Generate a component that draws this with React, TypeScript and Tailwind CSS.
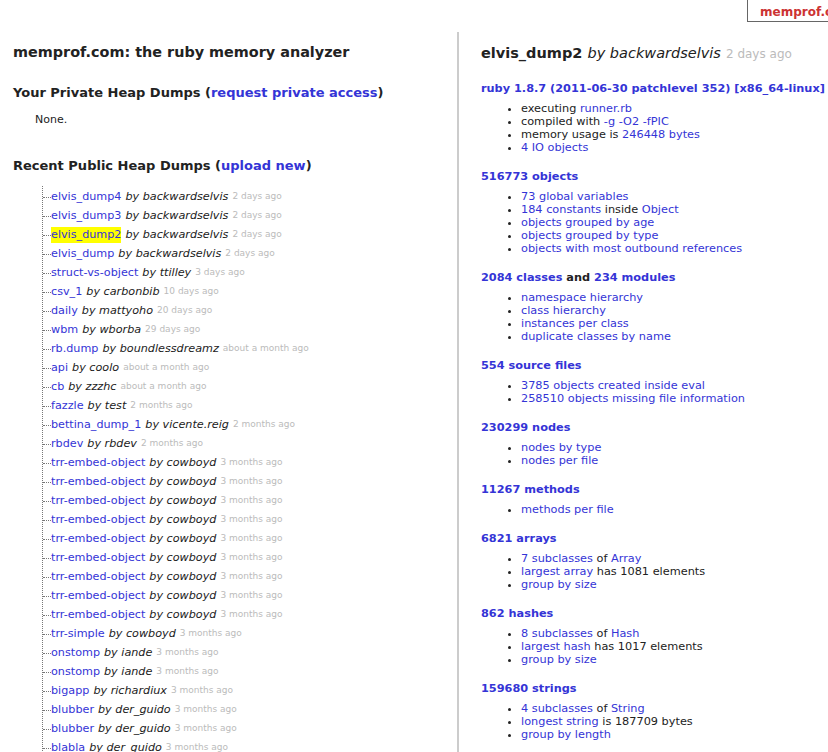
import React from "react";

type Dump = { name: string; user: string; ago: string; current?: boolean };

const dumps: Dump[] = [
  { name: "elvis_dump4", user: "backwardselvis", ago: "2 days ago" },
  { name: "elvis_dump3", user: "backwardselvis", ago: "2 days ago" },
  { name: "elvis_dump2", user: "backwardselvis", ago: "2 days ago", current: true },
  { name: "elvis_dump", user: "backwardselvis", ago: "2 days ago" },
  { name: "struct-vs-object", user: "ttilley", ago: "3 days ago" },
  { name: "csv_1", user: "carbonbib", ago: "10 days ago" },
  { name: "daily", user: "mattyoho", ago: "20 days ago" },
  { name: "wbm", user: "wborba", ago: "29 days ago" },
  { name: "rb.dump", user: "boundlessdreamz", ago: "about a month ago" },
  { name: "api", user: "coolo", ago: "about a month ago" },
  { name: "cb", user: "zzzhc", ago: "about a month ago" },
  { name: "fazzle", user: "test", ago: "2 months ago" },
  { name: "bettina_dump_1", user: "vicente.reig", ago: "2 months ago" },
  { name: "rbdev", user: "rbdev", ago: "2 months ago" },
  { name: "trr-embed-object", user: "cowboyd", ago: "3 months ago" },
  { name: "trr-embed-object", user: "cowboyd", ago: "3 months ago" },
  { name: "trr-embed-object", user: "cowboyd", ago: "3 months ago" },
  { name: "trr-embed-object", user: "cowboyd", ago: "3 months ago" },
  { name: "trr-embed-object", user: "cowboyd", ago: "3 months ago" },
  { name: "trr-embed-object", user: "cowboyd", ago: "3 months ago" },
  { name: "trr-embed-object", user: "cowboyd", ago: "3 months ago" },
  { name: "trr-embed-object", user: "cowboyd", ago: "3 months ago" },
  { name: "trr-embed-object", user: "cowboyd", ago: "3 months ago" },
  { name: "trr-simple", user: "cowboyd", ago: "3 months ago" },
  { name: "onstomp", user: "iande", ago: "3 months ago" },
  { name: "onstomp", user: "iande", ago: "3 months ago" },
  { name: "bigapp", user: "richardiux", ago: "3 months ago" },
  { name: "blubber", user: "der_guido", ago: "3 months ago" },
  { name: "blubber", user: "der_guido", ago: "3 months ago" },
  { name: "blabla", user: "der_guido", ago: "3 months ago" },
  { name: "blabla", user: "der_guido", ago: "3 months ago" },
];

// each part: [text, isLink]
type Part = [string, boolean];
type Section = { title: Part[]; items: Part[][] };

const sections: Section[] = [
  {
    title: [["ruby 1.8.7 (2011-06-30 patchlevel 352) [x86_64-linux]", true]],
    items: [
      [["executing ", false], ["runner.rb", true]],
      [["compiled with ", false], ["-g -O2 -fPIC", true]],
      [["memory usage is ", false], ["246448 bytes", true]],
      [["4 IO objects", true]],
    ],
  },
  {
    title: [["516773 objects", true]],
    items: [
      [["73 global variables", true]],
      [["184 constants", true], [" inside ", false], ["Object", true]],
      [["objects grouped by age", true]],
      [["objects grouped by type", true]],
      [["objects with most outbound references", true]],
    ],
  },
  {
    title: [["2084 classes", true], [" and ", false], ["234 modules", true]],
    items: [
      [["namespace hierarchy", true]],
      [["class hierarchy", true]],
      [["instances per class", true]],
      [["duplicate classes by name", true]],
    ],
  },
  {
    title: [["554 source files", true]],
    items: [
      [["3785 objects created inside eval", true]],
      [["258510 objects missing file information", true]],
    ],
  },
  {
    title: [["230299 nodes", true]],
    items: [[["nodes by type", true]], [["nodes per file", true]]],
  },
  {
    title: [["11267 methods", true]],
    items: [[["methods per file", true]]],
  },
  {
    title: [["6821 arrays", true]],
    items: [
      [["7 subclasses", true], [" of ", false], ["Array", true]],
      [["largest array", true], [" has 1081 elements", false]],
      [["group by size", true]],
    ],
  },
  {
    title: [["862 hashes", true]],
    items: [
      [["8 subclasses", true], [" of ", false], ["Hash", true]],
      [["largest hash", true], [" has 1017 elements", false]],
      [["group by size", true]],
    ],
  },
  {
    title: [["159680 strings", true]],
    items: [
      [["4 subclasses", true], [" of ", false], ["String", true]],
      [["longest string", true], [" is 187709 bytes", false]],
      [["group by length", true]],
    ],
  },
];

const renderParts = (parts: Part[]) =>
  parts.map(([text, link], i) =>
    link ? (
      <a key={i} href="#" className="text-[#3434d6]">
        {text}
      </a>
    ) : (
      <span key={i}>{text}</span>
    ),
  );

export default function App() {
  return (
    <div
      className="relative h-[752px] w-[828px] overflow-hidden bg-white text-[#222]"
      style={{ fontFamily: '"DejaVu Sans", Verdana, sans-serif' }}
    >
      {/* site badge */}
      <div className="absolute left-[747px] top-[-2px] h-[24px] w-[120px] border border-[#666] pl-[12px] pt-[4px] text-[12px] font-bold text-[#cc3333]">
        memprof.com
      </div>

      <div className="flex">
        {/* LEFT COLUMN */}
        <div className="w-[457px] shrink-0 pl-[13px] pt-[42px]">
          <h1 className="text-[14.4px] font-bold leading-[20px]">
            memprof.com: the ruby memory analyzer
          </h1>

          <h2 className="mt-[22px] text-[13px] font-bold leading-[18px]">
            Your Private Heap Dumps (
            <a href="#" className="text-[#3434d6]">
              request private access
            </a>
            )
          </h2>
          <p className="mt-[10px] pl-[22px] text-[11px]">None.</p>

          <h2 className="mt-[28px] text-[13px] font-bold leading-[18px]">
            Recent Public Heap Dumps (
            <a href="#" className="text-[#3434d6]">
              upload new
            </a>
            )
          </h2>

          <ul className="ml-[29px] mt-[11px] border-l border-dotted border-[#777] pt-[2px]">
            {dumps.map((d, i) => (
              <li key={i} className="flex h-[19px] items-center whitespace-nowrap text-[11.2px]">
                <span className="w-[8px] border-t border-dotted border-[#777]" />
                <a
                  href="#"
                  className={`text-[#3434d6] ${d.current ? "bg-[#ffff00]" : ""}`}
                >
                  {d.name}
                </a>
                <span className="ml-[4px] italic">by {d.user}</span>
                <span className="ml-[4px] text-[9px] text-[#bbbbbb]">{d.ago}</span>
              </li>
            ))}
          </ul>
        </div>

        {/* RIGHT COLUMN */}
        <div className="mt-[32px] min-h-[720px] flex-1 border-l-2 border-[#cccccc] pl-[22px] pt-[11px]">
          <h1 className="whitespace-nowrap text-[14.5px] font-bold leading-[20px]">
            elvis_dump2 <span className="italic font-normal">by backwardselvis</span>{" "}
            <span className="text-[12px] font-normal text-[#bbbbbb]">2 days ago</span>
          </h1>

          <div className="mt-[17px]">
            {sections.map((s, i) => (
              <div key={i} className="mb-[15px]">
                <h3 className="whitespace-nowrap text-[11.3px] font-bold leading-[15px]">
                  {renderParts(s.title)}
                </h3>
                <ul className="mt-[6px] list-disc pl-[40px] text-[11.3px] leading-[13px]">
                  {s.items.map((it, j) => (
                    <li key={j} className="whitespace-nowrap">
                      {renderParts(it)}
                    </li>
                  ))}
                </ul>
              </div>
            ))}
          </div>
        </div>
      </div>
    </div>
  );
}
